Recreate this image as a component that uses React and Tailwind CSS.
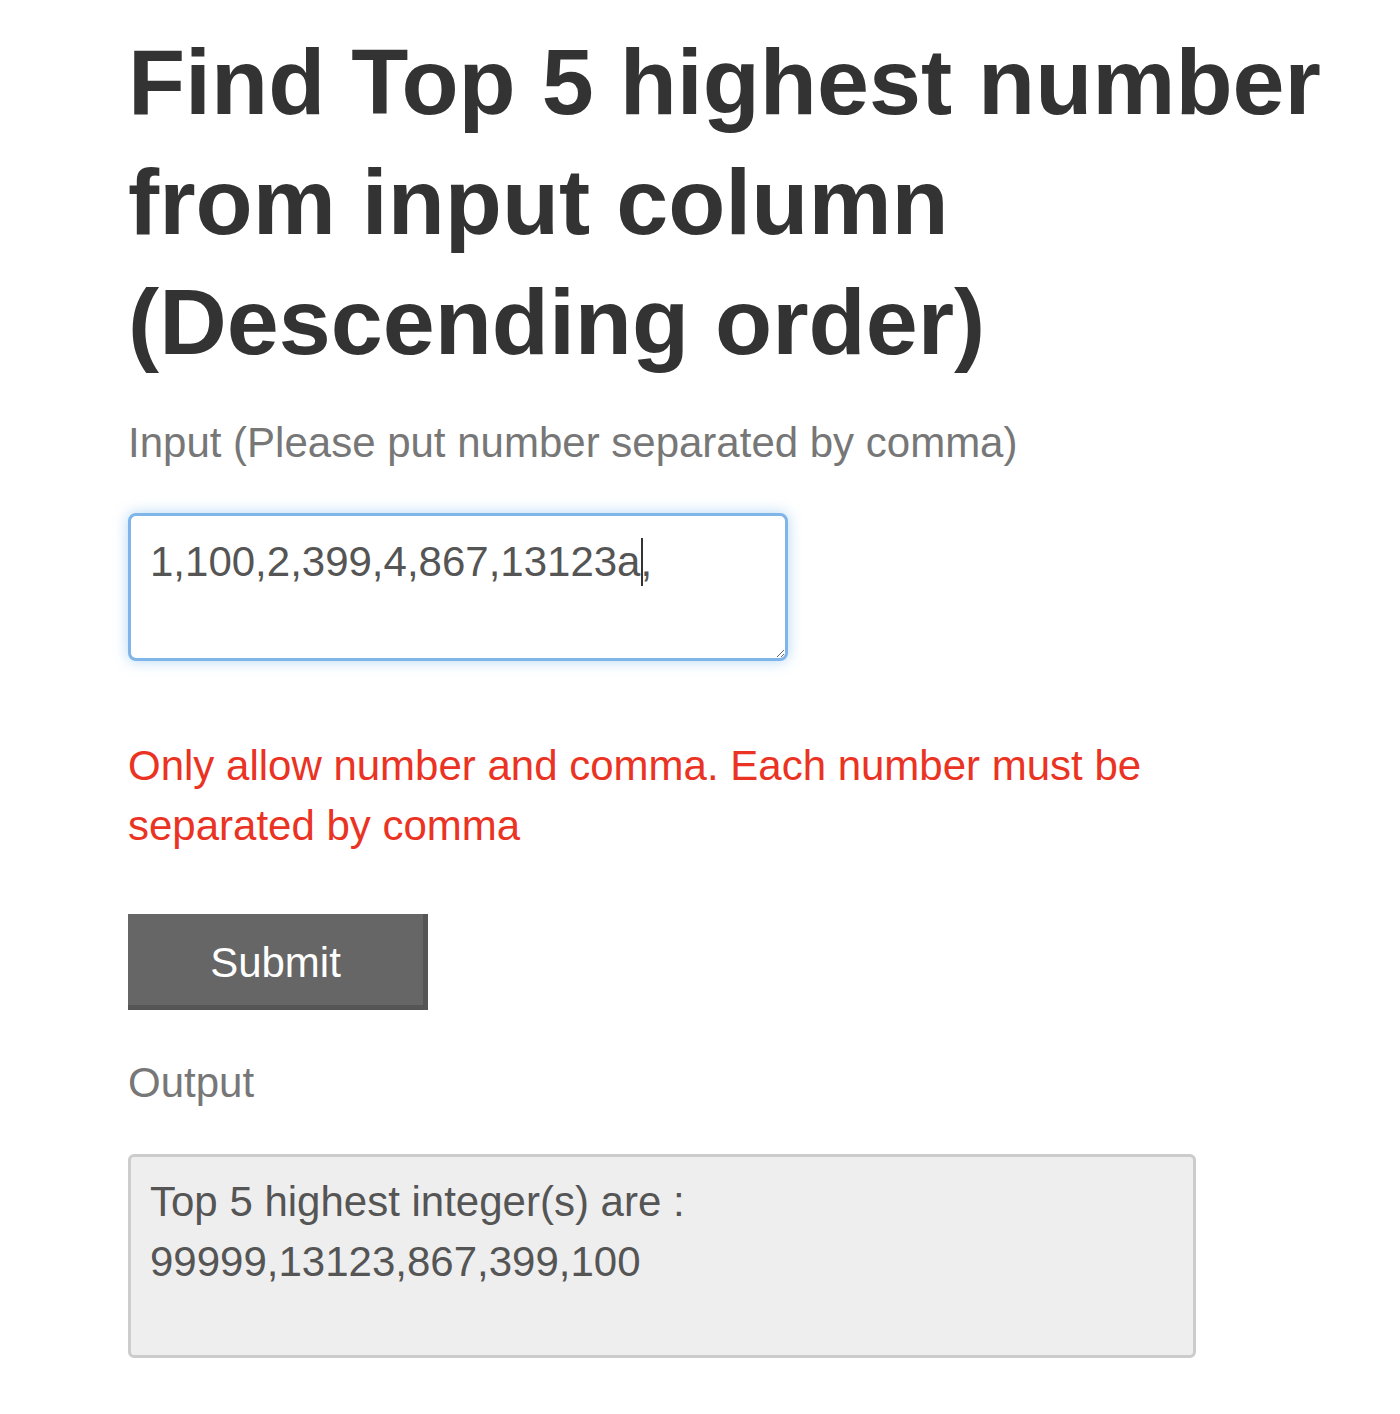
import React from "react";

export default function App() {
  const font = { fontFamily: '"Liberation Sans", Arial, Helvetica, sans-serif' };
  return (
    <div className="min-h-screen bg-white" style={font}>
      <div className="pl-[128px] pt-[22px] w-[1335px]">
        <h1 className="text-[93.5px] leading-[120px] font-bold text-[#333333] m-0">
          Find Top 5 highest number from input column (Descending order)
        </h1>
        <label className="block mt-[31px] text-[42px] leading-[60px] text-[#777777]">
          Input (Please put number separated by comma)
        </label>
        <div className="relative mt-[40px] w-[660px]">
          <textarea
            className="block w-[660px] h-[148px] border-[3px] border-[#80b5ea] rounded-[8px] shadow-[0_0_14px_rgba(102,175,233,0.5)] pt-[16px] px-[19px] text-[42px] leading-[60px] text-[#555555] outline-none bg-white"
            style={font}
            defaultValue="1,100,2,399,4,867,13123a,"
          />
          <span className="absolute left-[513px] top-[25px] w-[1.5px] h-[48px] bg-[#333333]" />
        </div>
        <p className="mt-[75px] text-[42px] leading-[60px] text-[#ea3323]">
          Only allow number and comma. Each number must be separated by comma
        </p>
        <button
          className="block mt-[58px] w-[300px] h-[96px] bg-[#666666] border-r-[5px] border-b-[5px] border-[#555555] text-white text-[42px] leading-none pt-[6px]"
          style={font}
        >
          Submit
        </button>
        <div className="mt-[43px] text-[42px] leading-[60px] text-[#777777]">Output</div>
        <div className="mt-[41px] w-[1068px] h-[204px] bg-[#eeeeee] border-[3px] border-[#cccccc] rounded-[6px] pt-[15px] px-[19px] text-[42px] leading-[60px] text-[#555555]">
          <div>Top 5 highest integer(s) are :</div>
          <div>99999,13123,867,399,100</div>
        </div>
      </div>
    </div>
  );
}
